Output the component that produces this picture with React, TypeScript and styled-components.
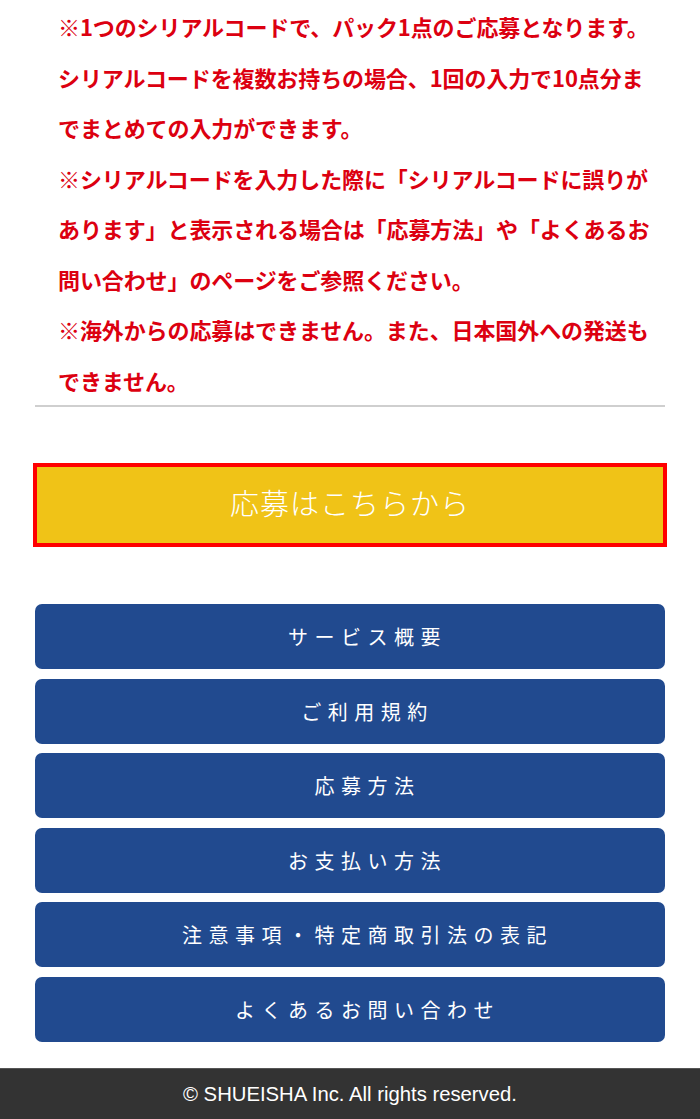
import React from 'react';
import styled, { createGlobalStyle } from 'styled-components';

const GlobalStyle = createGlobalStyle`
  html, body {
    margin: 0;
    padding: 0;
    background: #fff;
  }
  body {
    font-family: "Noto Sans CJK JP", "Noto Sans", sans-serif;
  }
`;

const notes = [
  ['※1つのシリアルコードで、パック1点のご応募となります。'],
  ['シリアルコードを複数お持ちの場合、1回の入力で10点分ま', 'でまとめての入力ができます。'],
  ['※シリアルコードを入力した際に「シリアルコードに誤りが', 'あります」と表示される場合は「応募方法」や「よくあるお', '問い合わせ」のページをご参照ください。'],
  ['※海外からの応募はできません。また、日本国外への発送も', 'できません。'],
];

const links = [
  'サービス概要',
  'ご利用規約',
  '応募方法',
  'お支払い方法',
  '注意事項・特定商取引法の表記',
  'よくあるお問い合わせ',
];

export default function App() {
  return (
    <>
      <GlobalStyle />
      <Page>
        <Notes>
          {notes.map((lines, i) => (
            <Note key={i}>
              {lines.map((line, j) => (
                <React.Fragment key={j}>
                  {j > 0 && <br />}
                  {line}
                </React.Fragment>
              ))}
            </Note>
          ))}
        </Notes>
        <Divider />
        <ApplyButton type="button">応募はこちらから</ApplyButton>
        <LinkList>
          {links.map((label) => (
            <LinkButton key={label} href="#">
              {label}
            </LinkButton>
          ))}
        </LinkList>
      </Page>
      <Footer>© SHUEISHA Inc. All rights reserved.</Footer>
    </>
  );
}

const Page = styled.main`
  padding: 1px 35px 26px;
  display: flex;
  flex-direction: column;
`;

const Notes = styled.div`
  padding: 0 23px;
`;

const Note = styled.p`
  margin: 0;
  color: #dc0010;
  font-size: 22px;
  font-weight: 700;
  line-height: 50.5px;
  white-space: nowrap;
  letter-spacing: -0.1px;
`;

const Divider = styled.hr`
  margin: 0;
  border: none;
  height: 2px;
  background: #cfcfcf;
`;

const ApplyButton = styled.button`
  margin: 56px -2px 0;
  height: 84px;
  padding: 0 0 6px;
  border: 4px solid #ff0000;
  background: #f0c317;
  color: #fff;
  font-family: "Noto Sans CJK JP", sans-serif;
  font-size: 29px;
  font-weight: 300;
  letter-spacing: 1px;
  cursor: pointer;
`;

const LinkList = styled.nav`
  margin-top: 57px;
  display: flex;
  flex-direction: column;
  gap: 9.5px;
`;

const LinkButton = styled.a`
  height: 65px;
  border-radius: 7px;
  background: #214a8f;
  color: #fff;
  text-decoration: none;
  display: flex;
  align-items: center;
  justify-content: center;
  font-size: 20px;
  font-weight: 400;
  letter-spacing: 6.5px;
  padding-left: 35px;
`;

const Footer = styled.footer`
  height: 52px;
  box-sizing: border-box;
  background: #333;
  border-top: 1px solid #555;
  color: #fff;
  display: flex;
  align-items: center;
  justify-content: center;
  font-family: "Liberation Sans", Arial, sans-serif;
  font-size: 20.3px;
`;
